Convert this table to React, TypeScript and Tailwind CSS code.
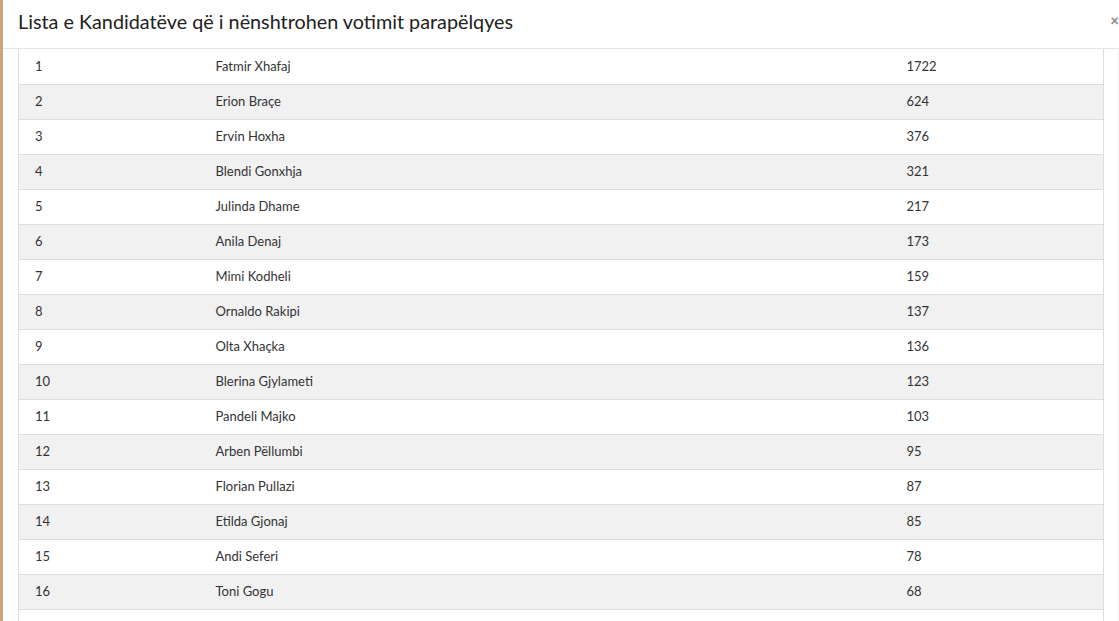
import React from 'react'

const rows: [number, string, number][] = [
    [1, 'Fatmir Xhafaj', 1722],
    [2, 'Erion Braçe', 624],
    [3, 'Ervin Hoxha', 376],
    [4, 'Blendi Gonxhja', 321],
    [5, 'Julinda Dhame', 217],
    [6, 'Anila Denaj', 173],
    [7, 'Mimi Kodheli', 159],
    [8, 'Ornaldo Rakipi', 137],
    [9, 'Olta Xhaçka', 136],
    [10, 'Blerina Gjylameti', 123],
    [11, 'Pandeli Majko', 103],
    [12, 'Arben Pëllumbi', 95],
    [13, 'Florian Pullazi', 87],
    [14, 'Etilda Gjonaj', 85],
    [15, 'Andi Seferi', 78],
    [16, 'Toni Gogu', 68]
]

export default function App() {
    return (
        <div className="h-[621px] w-[1119px] overflow-hidden bg-white flex font-['Lato',sans-serif] text-[#333]">
            <div className="w-[3px] shrink-0 bg-[#c9a57c]" />
            <div className="flex-1 flex flex-col min-w-0">
                <div className="h-[49px] shrink-0 border-b border-[#e5e5e5] flex items-center justify-between pl-[15px]">
                    <h4 className="text-[19.8px] leading-none text-[#222] pb-[5px]">
                        Lista e Kandidatëve që i nënshtrohen votimit parapëlqyes
                    </h4>
                    <span className="text-[#888] text-[15px] font-bold leading-none mb-[7px]">×</span>
                </div>
                <div className="flex">
                    <div className="w-[15px] shrink-0" />
                    <table className="w-[1086px] border-collapse text-[13px] border-x border-[#ddd]">
                        <tbody>
                            {rows.map(([n, name, votes], i) => (
                                <tr key={n} className={i % 2 === 1 ? 'bg-[#f1f1f1]' : 'bg-white'}>
                                    <td className="h-[35px] w-[180px] border-b border-[#ddd] pl-[16px] pt-[1px]">{n}</td>
                                    <td className="h-[35px] w-[691px] border-b border-[#ddd] pl-[17px] pt-[1px]">{name}</td>
                                    <td className="h-[35px] border-b border-[#ddd] pl-[17px] pt-[1px]">{votes}</td>
                                </tr>
                            ))}
                            <tr className="bg-white">
                                <td className="h-[35px]" />
                                <td className="h-[35px]" />
                                <td className="h-[35px]" />
                            </tr>
                        </tbody>
                    </table>
                    <div className="flex-1 border-r border-[#f0f0f0]" />
                </div>
            </div>
        </div>
    )
}
